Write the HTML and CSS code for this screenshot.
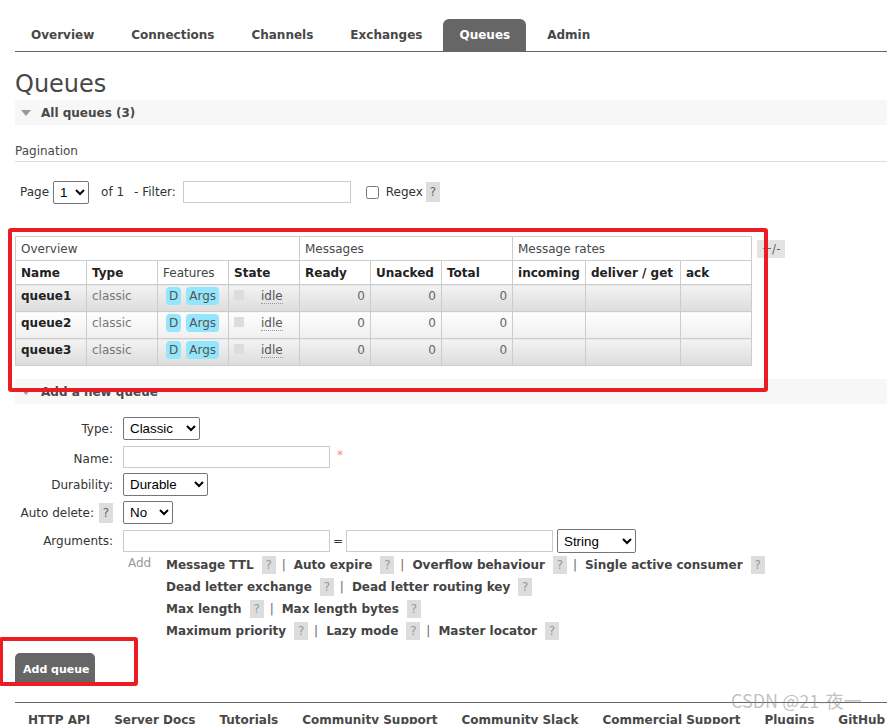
FILE: index.html
```html
<!DOCTYPE html>
<html>
<head>
<meta charset="utf-8">
<title>RabbitMQ Management - Queues</title>
<link rel="stylesheet" href="styles.css">
</head>
<body>
<div class="page">
  <nav class="menu">
    <ul>
      <li>Overview</li>
      <li>Connections</li>
      <li>Channels</li>
      <li>Exchanges</li>
      <li class="selected">Queues</li>
      <li>Admin</li>
    </ul>
  </nav>

  <h1>Queues</h1>
  <div class="section-bar"><span class="tri"></span><span>All queues (3)</span></div>

  <div class="pag-title">Pagination</div>
  <div class="pager">
    <span class="pg-page">Page</span>
    <select class="sel sel-page"><option>1</option></select>
    <span class="pg-of">of 1</span>
    <span class="pg-filter">- Filter:</span>
    <input class="txt txt-filter" type="text">
    <input class="chk" type="checkbox">
    <span class="pg-regex">Regex</span>
    <span class="help">?</span>
  </div>

  <div class="table-wrap">
    <table class="list">
      <colgroup>
        <col class="c71"><col class="c71"><col class="c71"><col class="c71">
        <col class="c71"><col class="c71"><col class="c71">
        <col class="c73"><col class="c95"><col class="c71">
      </colgroup>
      <thead>
        <tr class="grp">
          <th colspan="4">Overview</th>
          <th colspan="3">Messages</th>
          <th colspan="3">Message rates</th>
        </tr>
        <tr class="hdr">
          <th>Name</th><th>Type</th><th class="normal">Features</th><th>State</th>
          <th>Ready</th><th>Unacked</th><th>Total</th>
          <th>incoming</th><th>deliver / get</th><th>ack</th>
        </tr>
      </thead>
      <tbody>
        <tr class="alt1">
          <td class="name">queue1</td><td class="type">classic</td>
          <td class="feat"><span class="badge">D</span><span class="badge">Args</span></td>
          <td class="state"><span class="sq"></span><span class="idle">idle</span></td>
          <td class="num">0</td><td class="num">0</td><td class="num">0</td>
          <td></td><td></td><td></td>
        </tr>
        <tr class="alt2">
          <td class="name">queue2</td><td class="type">classic</td>
          <td class="feat"><span class="badge">D</span><span class="badge">Args</span></td>
          <td class="state"><span class="sq"></span><span class="idle">idle</span></td>
          <td class="num">0</td><td class="num">0</td><td class="num">0</td>
          <td></td><td></td><td></td>
        </tr>
        <tr class="alt1">
          <td class="name">queue3</td><td class="type">classic</td>
          <td class="feat"><span class="badge">D</span><span class="badge">Args</span></td>
          <td class="state"><span class="sq"></span><span class="idle">idle</span></td>
          <td class="num">0</td><td class="num">0</td><td class="num">0</td>
          <td></td><td></td><td></td>
        </tr>
      </tbody>
    </table>
    <span class="plusminus">+/-</span>
  </div>

  <div class="section-bar add-bar"><span class="tri"></span><span>Add a new queue</span></div>

  <div class="form-grid">
    <div class="lbl">Type:</div>
    <div class="fld"><select class="sel sel-type"><option>Classic</option></select></div>

    <div class="lbl lbl-name">Name:</div>
    <div class="fld"><input class="txt txt-arg" type="text"><span class="req">*</span></div>

    <div class="lbl">Durability:</div>
    <div class="fld"><select class="sel sel-dur"><option>Durable</option></select></div>

    <div class="lbl lbl-auto">Auto delete: <span class="help">?</span></div>
    <div class="fld"><select class="sel sel-no"><option>No</option></select></div>

    <div class="lbl">Arguments:</div>
    <div class="fld">
      <input class="txt txt-arg" type="text">
      <span class="eq">=</span>
      <input class="txt txt-arg" type="text">
      <select class="sel sel-str"><option>String</option></select>
    </div>
  </div>

  <div class="add-links">
    <span class="add-word">Add</span>
    <div class="link-lines">
      <div class="line"><b>Message TTL</b><span class="help">?</span><span class="sep">|</span><b>Auto expire</b><span class="help">?</span><span class="sep">|</span><b>Overflow behaviour</b><span class="help">?</span><span class="sep">|</span><b>Single active consumer</b><span class="help">?</span></div>
      <div class="line"><b>Dead letter exchange</b><span class="help">?</span><span class="sep">|</span><b>Dead letter routing key</b><span class="help">?</span></div>
      <div class="line"><b>Max length</b><span class="help">?</span><span class="sep">|</span><b>Max length bytes</b><span class="help">?</span></div>
      <div class="line"><b>Maximum priority</b><span class="help">?</span><span class="sep">|</span><b>Lazy mode</b><span class="help">?</span><span class="sep">|</span><b>Master locator</b><span class="help">?</span></div>
    </div>
  </div>

  <button class="btn" type="button">Add queue</button>

  <footer class="footer">
    <ul>
      <li>HTTP API</li>
      <li>Server Docs</li>
      <li>Tutorials</li>
      <li>Community Support</li>
      <li>Community Slack</li>
      <li>Commercial Support</li>
      <li>Plugins</li>
      <li>GitHub</li>
    </ul>
  </footer>
</div>

<div class="mark mark-table"></div>
<div class="mark mark-button"></div>
<div class="watermark">CSDN @21-夜一</div>
</body>
</html>
```

FILE: styles.css
```css
* { box-sizing: border-box; }

html, body {
  margin: 0;
  padding: 0;
}

body {
  position: relative;
  width: 887px;
  height: 724px;
  overflow: hidden;
  background: #fff;
  color: #444;
  font: 12px/14px "DejaVu Sans", Verdana, sans-serif;
}

.page {
  padding: 19px 0 0 15px;
}

/* ---------- top menu ---------- */
.menu ul {
  list-style: none;
  margin: 0;
  padding: 0;
  display: flex;
  gap: 5px;
  border-bottom: 1px solid #666;
}
.menu li {
  padding: 9px 16px;
  line-height: 14px;
  font-weight: bold;
  color: #484848;
  border-radius: 6px 6px 0 0;
}
.menu li.selected {
  background: #666;
  color: #fff;
}

/* ---------- headings ---------- */
h1 {
  margin: 17px 0 0;
  font-size: 24px;
  line-height: 31px;
  font-weight: normal;
  color: #484848;
}

.section-bar {
  display: flex;
  align-items: center;
  gap: 10px;
  height: 25px;
  padding-left: 6px;
  background: #f7f7f7;
  font-weight: bold;
  color: #484848;
}
.tri {
  width: 0;
  height: 0;
  border-left: 5px solid transparent;
  border-right: 5px solid transparent;
  border-top: 6px solid #999;
}

.pag-title {
  margin-top: 19px;
  padding-bottom: 3px;
  border-bottom: 1px solid #ddd;
  color: #484848;
}

/* ---------- pager ---------- */
.pager {
  display: flex;
  align-items: center;
  height: 22px;
  margin-top: 19px;
  color: #333;
}
.pg-page { margin-left: 5px; }
.sel-page { margin-left: 4px; width: 36px; }
.pg-of { margin-left: 12px; }
.pg-filter { margin-left: 10px; }
.txt-filter { margin-left: 7px; width: 168px; height: 21px; }
.chk { margin: 0 0 0 15px; width: 13px; height: 13px; }
.pg-regex { margin-left: 7px; }
.pager .help { margin-left: 3px; }

/* ---------- form controls ---------- */
.sel {
  height: 23px;
  font: 13.33px "Liberation Sans", Arial, sans-serif;
  color: #000;
  background: #fff;
  border: 1px solid #767676;
  border-radius: 2px;
  padding: 0 2px;
}
.txt {
  height: 22px;
  border: 1px solid #ccc;
  background: #fff;
  padding: 0 3px;
  font: 13.33px "Liberation Sans", Arial, sans-serif;
}

.help {
  display: inline-block;
  width: 14px;
  height: 20px;
  line-height: 20px;
  text-align: center;
  background: #ddd;
  color: #666;
  font-weight: normal;
}

/* ---------- table ---------- */
.table-wrap {
  display: flex;
  align-items: flex-start;
  margin-top: 33px;
}
.list {
  border-collapse: collapse;
  table-layout: fixed;
  width: 736px;
}
.c71 { width: 71px; }
.c73 { width: 73px; }
.c95 { width: 95px; }

.list th, .list td {
  border: 1px solid #ccc;
  padding: 0 5px;
  text-align: left;
  white-space: nowrap;
}
.list .grp th {
  height: 24px;
  font-weight: normal;
  color: #484848;
}
.list .hdr th {
  height: 24px;
  font-weight: bold;
  color: #222;
}
.list .hdr th.normal { font-weight: normal; color: #444; }

.list td {
  height: 27px;
  vertical-align: top;
  padding-top: 4px;
  color: #666;
}
.list tr.alt1 td { background: linear-gradient(#f3f3f3, #dcdcdc); }
.list tr.alt2 td { background: linear-gradient(#fefefe, #efefef); }

.list td.name { font-weight: bold; color: #222; }
.list td.type { color: #777; }
.list td.num { text-align: right; }

.list td.feat { padding: 2px 0 0 8px; }
.badge {
  display: inline-block;
  height: 18px;
  line-height: 18px;
  padding: 0 3px;
  margin-right: 5px;
  border-radius: 4px;
  background: #94e6fc;
  color: #555;
}
.list td.state { padding-left: 5px; }
.sq {
  display: inline-block;
  width: 10px;
  height: 10px;
  background: #ddd;
  vertical-align: top;
  margin-top: 1px;
}
.idle {
  display: inline-block;
  margin-left: 17px;
  line-height: 13px;
  border-bottom: 1px dotted #999;
  color: #555;
}

.plusminus {
  margin: 4px 0 0 5px;
  padding: 2px 5px;
  background: #e4e4e4;
  color: #666;
}

/* ---------- add form ---------- */
.add-bar { margin-top: 13px; }

.form-grid {
  display: grid;
  grid-template-columns: 98px auto;
  column-gap: 10px;
  grid-auto-rows: 28px;
  align-items: start;
  margin-top: 13px;
  color: #333;
}
.lbl {
  text-align: right;
  line-height: 25px;
  white-space: nowrap;
}
.lbl-name { line-height: 28px; }
.lbl-auto {
  display: flex;
  justify-content: flex-end;
  align-items: center;
  gap: 5px;
  margin-top: 2px;
  line-height: 20px;
  padding-left: 5px;
}
.fld {
  display: flex;
  align-items: flex-start;
}
.sel-type { width: 77px; }
.sel-dur { width: 85px; }
.sel-no { width: 50px; margin-top: 0; }
.sel-str { width: 79px; margin-left: 4px; height: 24px; }
.txt-arg { width: 207px; }
.fld .txt-arg { margin-top: 1px; }
.req {
  margin-left: 7px;
  color: #f88;
  line-height: 14px;
  margin-top: 3px;
}
.eq {
  width: 16px;
  text-align: center;
  line-height: 24px;
}

.add-links {
  display: flex;
  align-items: flex-start;
  margin: -3px 0 0 113px;
}
.add-word {
  width: 38px;
  color: #999;
  line-height: 18px;
}
.link-lines .line {
  display: flex;
  align-items: center;
  height: 22px;
  white-space: nowrap;
}
.link-lines b {
  color: #444;
  font-weight: bold;
}
.link-lines .help {
  margin-left: 8px;
  height: 18px;
  line-height: 18px;
  color: #999;
}
.sep {
  margin: 0 8px 0 6px;
  color: #666;
}

/* ---------- button ---------- */
.btn {
  display: block;
  margin-top: 11px;
  width: 80px;
  height: 32px;
  padding: 0 0 0 8px;
  text-align: left;
  border: none;
  border-radius: 5px 5px 0 0;
  background: #666;
  color: #fff;
  font: bold 11px "DejaVu Sans", Verdana, sans-serif;
}

/* ---------- footer ---------- */
.footer {
  margin-top: 17px;
  border-top: 1px solid #666;
}
.footer ul {
  list-style: none;
  margin: 0;
  padding: 10px 0 0 13px;
  display: flex;
  gap: 24px;
  white-space: nowrap;
}
.footer li {
  font-weight: bold;
  color: #484848;
}

/* ---------- overlays (annotation marks + watermark) ---------- */
.mark {
  position: absolute;
  border: 4px solid #ec1c24;
  border-radius: 3px;
  pointer-events: none;
}
.mark-table {
  left: 8px;
  top: 228px;
  width: 760px;
  height: 164px;
}
.mark-button {
  left: -1px;
  top: 637px;
  width: 139px;
  height: 49px;
}
.watermark {
  position: absolute;
  left: 731px;
  top: 689px;
  font: 18px/22px "Noto Sans CJK SC", "DejaVu Sans", sans-serif;
  color: rgba(140, 140, 140, 0.55);
  white-space: nowrap;
}
```
